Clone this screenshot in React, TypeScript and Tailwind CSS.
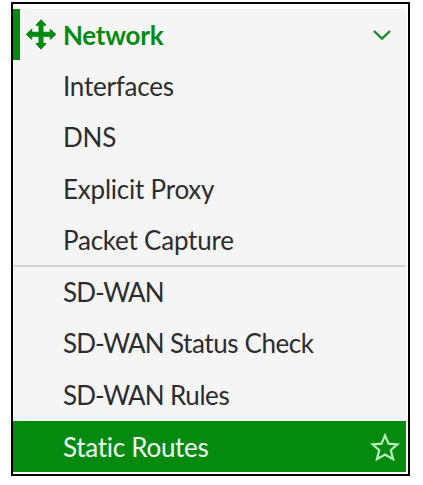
// App.tsx
//
// Sidebar menu with the Network section expanded.

/** One entry of the Network section. */
interface MenuItem {
  label: string;
  /** Tightly set product name in front of the label. */
  prefix?: string;
  /** Highlights the row and shows the favourite star. */
  active?: boolean;
}

const GENERAL_ITEMS: MenuItem[] = [
  { label: 'Interfaces' },
  { label: 'DNS' },
  { label: 'Explicit Proxy' },
  { label: 'Packet Capture' },
];

const ROUTING_ITEMS: MenuItem[] = [
  { prefix: 'SD-WAN', label: '' },
  { prefix: 'SD-WAN', label: ' Status Check' },
  { prefix: 'SD-WAN', label: ' Rules' },
  { label: 'Static Routes', active: true },
];

/** Four-way arrow in front of the section title. */
function ArrowsIcon() {
  return (
    <svg className="size-[31px]" viewBox="0 0 31 31" fill="currentColor" stroke="currentColor" strokeLinejoin="round">
      <path d="M15 0.7L20 6.2H17V13.3H24.2V10.2L29.8 15.3L24.2 20.4V17.3H17V24.5H20L15 30.2L10 24.5H13V17.3H5.8V20.4L0.3 15.3L5.8 10.2V13.3H13V6.2H10Z" />
    </svg>
  );
}

/** Outlined star at the right of the active row. */
function StarIcon() {
  return (
    <svg className="h-7 w-[30px]" viewBox="0 0 30 28" fill="none" stroke="#b9efbd" strokeWidth="2.2">
      <path d="M15 2.4L18.5 10.6L27.5 11.3L20.8 17.2L23.1 26.2L15 21.5L6.9 26.2L9.2 17.2L2.5 11.3L11.5 10.6Z" />
    </svg>
  );
}

/** Menu row. */
function MenuRow({ label, prefix, active }: MenuItem) {
  if (active) {
    return (
      <li className="flex h-[51px] items-center justify-between bg-[#058a10] pr-[6px] pl-[50px] text-[#f2fff2]">
        <span>{label}</span>
        <StarIcon />
      </li>
    );
  }

  if (prefix) {
    return (
      <li className="flex h-[51.3px] items-center pb-[2px] pl-[50px] tracking-[-0.4px] whitespace-pre">
        <span className="tracking-[-0.95px]">{prefix}</span>
        {label}
      </li>
    );
  }

  return <li className="flex h-[51.3px] items-center pl-[50px] tracking-[-0.22px]">{label}</li>;
}

export default function App() {
  return (
    <div className="h-[485px] w-[423px] overflow-hidden bg-white pt-[2px] pl-[11px] font-['Lato',sans-serif] text-[26px] leading-none tracking-[-0.28px] text-[#2b2c30]">
      <nav className="h-[474px] w-[399px] border-2 border-black bg-white pt-[5px] pr-[2px]">
        <div className="h-[463px] bg-[#f5f5f5]">
          <div className="flex h-[51.3px] items-center border-l-[7px] border-[#058a10] pr-[14px] pl-[6px] font-bold text-[#058a10]">
            <ArrowsIcon />
            <span className="ml-[6px] grow">Network</span>
            <svg className="h-3 w-5" viewBox="0 0 20 12" fill="none" stroke="#188c2c" strokeWidth="2.4">
              <path d="M2 2L10 9.6L18 2" />
            </svg>
          </div>
          <ul>
            {GENERAL_ITEMS.map((item) => (
              <MenuRow key={item.label} {...item} />
            ))}
          </ul>
          <ul className="border-t-2 border-[#d3d3d3]">
            {ROUTING_ITEMS.map((item) => (
              <MenuRow key={item.label} {...item} />
            ))}
          </ul>
        </div>
      </nav>
    </div>
  );
}
